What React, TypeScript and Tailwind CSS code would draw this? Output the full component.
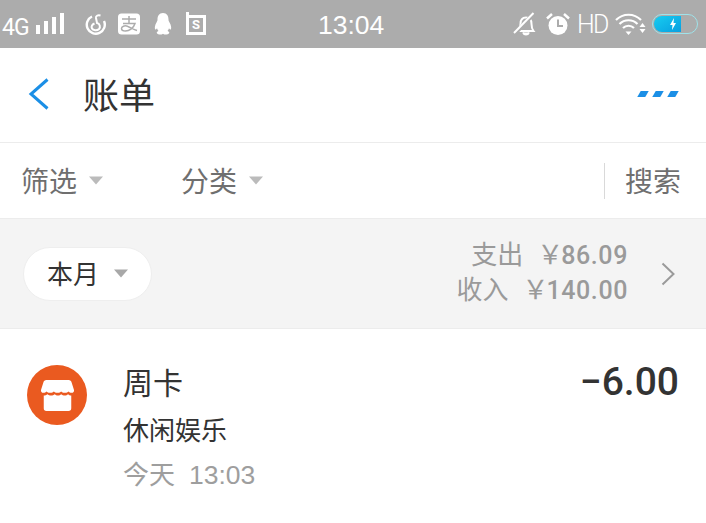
const cjk = "font-['Roboto','Noto_Sans_CJK_SC',sans-serif]";

function Caret({ className }: { className: string }) {
  return (
    <svg width="14" height="9" viewBox="0 0 14 9" className={className}>
      <path d="M0 0.5h14L7 8.5z" fill="currentColor" />
    </svg>
  );
}

function StatusLeft() {
  return (
    <div className="flex items-center">
      <span className="w-[33px] pl-[2px] text-[23px] leading-none mt-[6px] tracking-[-1px]">4G</span>
      <div className="flex items-end gap-[4px] h-[22px] ml-[3px] mb-[2px]">
        <i className="block w-[4px] h-[9px] bg-white" />
        <i className="block w-[4px] h-[13px] bg-white" />
        <i className="block w-[4px] h-[17px] bg-white" />
        <i className="block w-[4px] h-[21px] bg-white" />
      </div>
      {/* netease music */}
      <svg width="22" height="24" viewBox="0 0 22 24" className="ml-[21px]" fill="none" stroke="white">
        <path d="M7 4.500A9 9 0 1 0 19 9" strokeWidth="2.400" />
        <path d="M9.500 11.500c-2.500 1-3.500 3-2.500 5 1 2 5 2.500 7 .5 1.800-2 .8-5.500-2-6L11 6c-.3-2 1.500-3.200 4.500-2.500" strokeWidth="2" />
      </svg>
      {/* alipay */}
      <svg width="23" height="22" viewBox="0 0 23 22" className="ml-[11px]">
        <rect width="22" height="21" y="0.500" rx="3.500" fill="white" />
        <path d="M4 6h14M11 3v7M5 10.500h12c-1.500 5-6 7.500-9.500 7.500-2.500 0-4-1-4-2.500 0-2 3-3.500 6.500-2 3 1.200 5.500 3 9 4" fill="none" stroke="#acacac" strokeWidth="1.500" />
      </svg>
      {/* qq */}
      <svg width="20" height="22" viewBox="0 0 20 22" className="ml-[12px]">
        <path d="M10 0c4 0 5.500 3 5.500 6.500 0 1 .3 1.700 1 3 1.500 2.500 2 5 1.500 6.500-.4 1-1.200.5-2-.8-.3 1.200-.8 2-1.500 2.700.9.400 1.800 1 1.800 1.800 0 1.300-2.500 1.800-4.300 1.800-1 0-1.500-.3-2-.8-.5.500-1 .8-2 .8-1.800 0-4.300-.5-4.300-1.800 0-.8.900-1.400 1.800-1.800-.7-.7-1.200-1.500-1.500-2.700-.8 1.300-1.600 1.800-2 .8-.5-1.500 0-4 1.500-6.500.7-1.300 1-2 1-3C4.500 3 6 0 10 0z" fill="white" />
      </svg>
      {/* s note */}
      <div className="ml-[13px] mt-[1px] w-[20px] h-[20px] border-[3px] border-white flex items-center justify-center relative">
        <span className="text-[13px] leading-none font-bold text-white">S</span>
        <i className="absolute -top-[6px] -left-[3px] w-[3px] h-[4px] bg-white" />
      </div>
    </div>
  );
}

function StatusRight() {
  return (
    <div className="flex items-center">
      {/* muted bell */}
      <svg width="24" height="24" viewBox="0 0 24 24" fill="none" stroke="white" strokeWidth="2">
        <path d="M5 19c2-2 2.500-4 2.500-7 0-4 2-6.500 5.500-6.500s5.500 2.500 5.500 6.500c0 3 .5 5 2 7z" />
        <path d="M10 20.500a3.200 3.200 0 0 0 6 0" fill="white" />
        <path d="M1 22.500 21 1.500" stroke="#acacac" strokeWidth="4" />
        <path d="M1 21 20.500 1" />
      </svg>
      {/* alarm */}
      <svg width="24" height="24" viewBox="0 0 24 24" className="ml-[9px]">
        <circle cx="12" cy="13.500" r="9.500" fill="white" />
        <path d="M12 7.500v6.500h5" fill="none" stroke="#acacac" strokeWidth="2" />
        <path d="M1 6.500 6 2M23 6.500 18 2" stroke="white" strokeWidth="2.500" />
      </svg>
      <span className="ml-[7px] text-[25px] leading-none font-light tracking-[-1.500px] text-white">HD</span>
      {/* wifi */}
      <svg width="31" height="24" viewBox="0 0 31 24" className="ml-[7px]" fill="none" stroke="white" strokeWidth="2.200">
        <path d="M1 8c7-7 18-7 25 0M4.500 12c5-5 13-5 18 0M8 16c3-3 8-3 11 0" />
        <path d="M10.500 19.500h6L13.500 23z" fill="white" stroke="none" />
        <path d="M24.500 15h6l-3-4zM24.500 17h6l-3 4z" fill="white" stroke="none" />
      </svg>
      {/* battery */}
      <div className="ml-[6px] w-[46px] h-[20px] rounded-[10px] border border-[#9fe3ea] p-[1px] flex">
        <div className="w-[27px] h-full rounded-l-[8px] bg-gradient-to-br from-[#18cdf0] to-[#0a9fe0] flex items-center justify-end pr-[4px]">
          <svg width="8" height="12" viewBox="0 0 8 12">
            <path d="M5 0 1 7h2.500L3 12l4-7H4.500z" fill="white" />
          </svg>
        </div>
      </div>
    </div>
  );
}

export default function App() {
  return (
    <div className={`w-[706px] h-[523px] overflow-hidden bg-white ${cjk}`}>
      <div className="relative h-[48px] bg-[#acacac] text-white flex items-center justify-between pr-[8px]">
        <StatusLeft />
        <span className="absolute left-[318px] top-[10px] text-[26.500px] leading-[30px] font-['Liberation_Sans',sans-serif]">13:04</span>
        <StatusRight />
      </div>

      <div className="h-[95px] border-b border-[#ececec] flex items-center justify-between pl-[28px] pr-[29px]">
        <div className="flex items-center">
          <svg width="21" height="32" viewBox="0 0 21 32" fill="none" stroke="#1b8fe6" strokeWidth="3" className="-mt-[2px]">
            <path d="M19.500 1.500 3 16l16.500 14.500" />
          </svg>
          <span className="ml-[34px] text-[36px] leading-none text-[#333333] mt-[4px]">账单</span>
        </div>
        <div className="flex gap-[7px] mb-[2px]">
          <i className="block w-[8px] h-[6px] bg-[#1b8fe6] -skew-x-[30deg]" />
          <i className="block w-[8px] h-[6px] bg-[#1b8fe6] -skew-x-[30deg]" />
          <i className="block w-[8px] h-[6px] bg-[#1b8fe6] -skew-x-[30deg]" />
        </div>
      </div>

      <div className="h-[76px] border-b border-[#ececec] flex items-center pl-[21px] pr-[25px] text-[#6f6f6f] text-[28px] leading-none">
        <div className="w-[160px] flex items-center">
          <span className="mt-[5px]">筛选</span>
          <Caret className="ml-[12px] text-[#bbbbbb]" />
        </div>
        <span className="mt-[5px]">分类</span>
        <Caret className="ml-[12px] text-[#bbbbbb]" />
        <div className="ml-auto flex items-center">
          <i className="block w-px h-[36px] bg-[#d9d9d9] mr-[20px]" />
          <span className="mt-[5px]">搜索</span>
        </div>
      </div>

      <div className="h-[110px] bg-[#f4f4f4] border-b border-[#ececec] flex items-center pl-[23px] pr-[31px]">
        <div className="w-[129px] h-[54px] rounded-[27px] bg-white border border-[#eeeeee] flex items-center pl-[23px] text-[#333333] text-[26px] leading-none">
          <span className="mt-[3px]">本月</span>
          <Caret className="ml-[15px] text-[#a8a8a8]" />
        </div>
        <div className="ml-auto -mt-[2px] flex flex-col items-end text-[#9a9a9a] text-[26px] leading-[35px]">
          <div className="flex">
            <span>支出</span>
            <span className="ml-[14px]">￥</span>
            <span className="text-[25px] font-medium tracking-[0.600px] -ml-[2px]">86.09</span>
          </div>
          <div className="flex">
            <span>收入</span>
            <span className="ml-[14px]">￥</span>
            <span className="text-[25px] font-medium tracking-[0.600px] -ml-[2px]">140.00</span>
          </div>
        </div>
        <svg width="14" height="24" viewBox="0 0 14 24" className="ml-[33px]" fill="none" stroke="#9a9a9a" strokeWidth="2">
          <path d="M1.500 1.500 12.500 12 1.500 22.500" />
        </svg>
      </div>

      <div className="flex items-start pl-[27px] pr-[27px] pt-[36px]">
        <div className="w-[60px] h-[60px] rounded-full bg-[#ea5a20] flex items-center justify-center">
          <svg width="33" height="33" viewBox="0 0 36 34">
            <path d="M6 0h24c2 0 3 1 3.500 3L36 11c.3 2-1 3-2 3-2 .3-3-.8-4-1.500-1 .7-2.500 1.800-4 1.500-1.500.3-3-.8-4-1.500-1 .7-2.500 1.800-4 1.500-1.500.3-3-.8-4-1.500-1 .7-2.500 1.800-4 1.500-1.500.3-3-.8-4-1.500-1 .7-2 1.800-4 1.500-1 0-2.300-1-2-3L2.500 3C3 1 4 0 6 0z" fill="white" />
            <path d="M3 17c1.500 0 3-.5 4-1.500 1 1 2.500 1.500 4 1.500s3-.5 4-1.500c1 1 2 1.500 3.500 1.500s2.500-.5 3.500-1.500c1 1 2.500 1.500 4 1.500s2.500-.5 3.500-1.500c1 1 2 1.500 3.500 1.500v14c0 2-1 3-3 3H6c-2 0-3-1-3-3z" fill="white" />
          </svg>
        </div>
        <div className="ml-[36px] flex flex-col">
          <span className="text-[30px] leading-[38px] text-[#333333]">周卡</span>
          <span className="mt-[10px] text-[26px] leading-[36px] text-[#333333]">休闲娱乐</span>
          <span className="mt-[8px] text-[26px] leading-[36px] text-[#9e9e9e]">
            今天<span className="ml-[14px] text-[26.500px] font-['Liberation_Sans',sans-serif]">13:03</span>
          </span>
        </div>
        <span className="ml-auto -mt-[2px] text-[39px] leading-[38px] font-medium text-[#333333]">−6.00</span>
      </div>
    </div>
  );
}
